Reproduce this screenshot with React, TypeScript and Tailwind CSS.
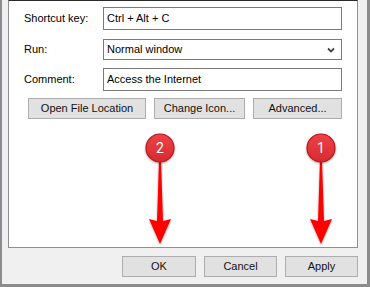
const font = { fontFamily: '"Liberation Sans", Arial, sans-serif' };

const Field = ({ label, children }: { label: string; children: React.ReactNode }) => (
  <div className="flex items-center">
    <div className="w-[79px] pl-[15px] box-content text-[11px] text-black">{label}</div>
    {children}
  </div>
);

const Btn = ({ label, w }: { label: string; w: string }) => (
  <div
    className={`${w} h-[21px] flex items-center justify-center bg-[#e1e1e1] border border-[#adadad] text-[11px] text-[#111]`}
  >
    {label}
  </div>
);

const Badge = ({ n, cx }: { n: string; cx: number }) => (
  <g>
    <defs>
      <linearGradient id={`g${n}`} x1="0" y1="0" x2="0" y2="1">
        <stop offset="0" stopColor="#ee4348" />
        <stop offset="1" stopColor="#d42a30" />
      </linearGradient>
    </defs>
    {/* arrow */}
    <path
      d={`M${cx - 1} 160 L${cx + 1} 160 L${cx + 3} 221 L${cx + 11} 219 L${cx} 244 L${cx - 11} 219 L${cx - 3} 221 Z`}
      fill="#ff0000"
      filter="url(#sh)"
    />
    <circle cx={cx} cy={148} r={14} fill={`url(#g${n})`} stroke="#b8161d" strokeWidth="1.2" filter="url(#sh)" />
    <text
      x={cx}
      y={153}
      textAnchor="middle"
      fill="#fff"
      fontSize="14"
      fontFamily="Roboto, 'Liberation Sans', sans-serif"
    >
      {n}
    </text>
  </g>
);

export default function App() {
  return (
    <div
      style={font}
      className="relative w-[370px] h-[287px] bg-[#f0f0f0] border-l-2 border-r-[3px] border-b-[3px] border-[#8c8c8c] flex flex-col"
    >
      {/* Tab page */}
      <div className="ml-[6px] w-[350px] h-[248px] bg-white border border-[#8f8f96] border-t-[#2a2a2a] pt-[6px] flex flex-col">
        <Field label="Shortcut key:">
          <div className="w-[239px] h-[23px] border border-[#7a7a7a] flex items-center pl-[3px] text-[11px]">
            Ctrl + Alt + C
          </div>
        </Field>
        <div className="mt-[9px]">
          <Field label="Run:">
            <div className="w-[239px] h-[21px] border border-[#7a7a7a] flex items-center justify-between pl-[3px] pr-[6px] text-[11px]">
              <span>Normal window</span>
              <svg width="8" height="6" viewBox="0 0 8 6">
                <path d="M1 1.5 L4 4.5 L7 1.5" fill="none" stroke="#444" strokeWidth="1.8" />
              </svg>
            </div>
          </Field>
        </div>
        <div className="mt-[8px]">
          <Field label="Comment:">
            <div className="w-[239px] h-[23px] border border-[#7a7a7a] flex items-center pl-[3px] text-[11px]">
              Access the Internet
            </div>
          </Field>
        </div>
        <div className="mt-[7px] ml-[19px] flex gap-[8px]">
          <Btn label="Open File Location" w="w-[118px]" />
          <Btn label="Change Icon..." w="w-[91px]" />
          <Btn label="Advanced..." w="w-[89px]" />
        </div>
      </div>

      {/* Dialog buttons */}
      <div className="mt-[8px] w-[356px] flex justify-end gap-[8px]">
        <Btn label="OK" w="w-[74px]" />
        <Btn label="Cancel" w="w-[73px]" />
        <Btn label="Apply" w="w-[73px]" />
      </div>

      {/* Callouts */}
      <svg className="absolute -left-[2px] top-0 pointer-events-none" width="370" height="287">
        <defs>
          <filter id="sh" x="-50%" y="-50%" width="200%" height="200%">
            <feDropShadow dx="0" dy="1" stdDeviation="1.2" floodColor="#000" floodOpacity="0.35" />
          </filter>
        </defs>
        <Badge n="2" cx={160} />
        <Badge n="1" cx={321} />
      </svg>
    </div>
  );
}
